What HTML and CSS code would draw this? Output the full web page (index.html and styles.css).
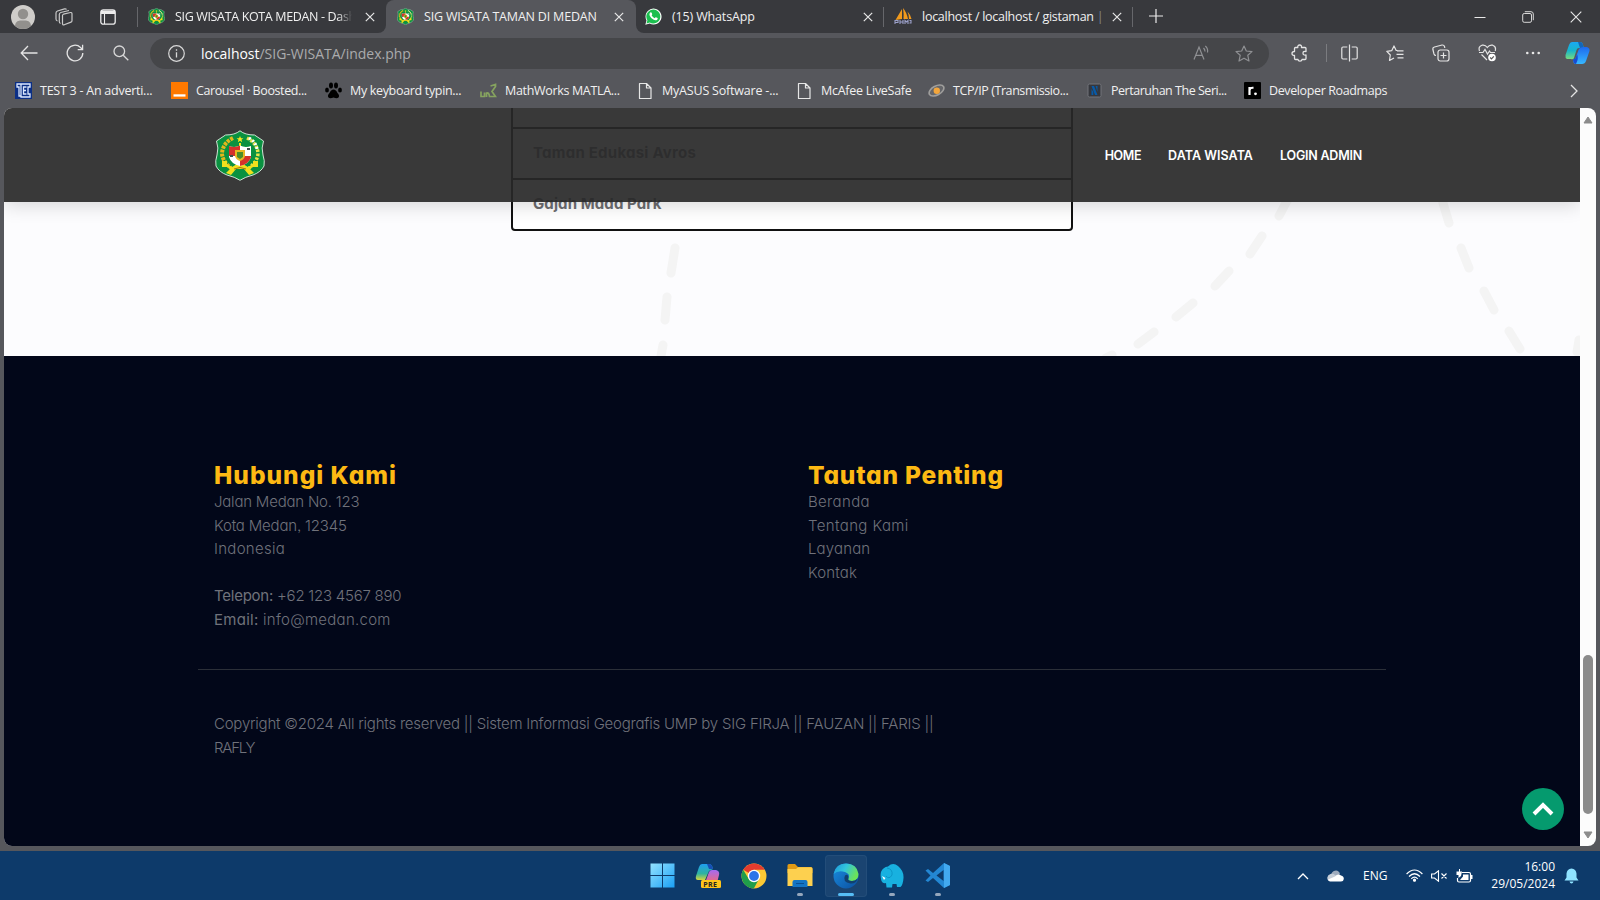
FILE: index.html
```html
<!DOCTYPE html>
<html lang="id">
<head>
<meta charset="utf-8">
<title>SIG WISATA TAMAN DI MEDAN</title>
<link rel="stylesheet" href="styles.css">
</head>
<body>
<svg class="defs" width="0" height="0">
  <symbol id="crest" viewBox="0 0 50 51">
    <path d="M25 .8Q30 5 39.500 5L48.500 11Q46 18 48 25Q50 31 49 36Q46 42 38 45Q30 47 25 50.300Q20 47 12 45Q4 42 1 36Q0 31 2 25Q4 18 1.500 11L10.500 5Q20 5 25 .8Z" fill="#0a9140" stroke="#cfe3d5"/>
    <path d="M18 8Q8 13 7 23Q7 31 16 38" fill="none" stroke="#e3b71a" stroke-width="4" stroke-dasharray="3 1"/>
    <path d="M32 8Q42 13 43 23Q43 31 34 38" fill="none" stroke="#e8e34a" stroke-width="3.500" stroke-dasharray="2.500 1.500"/>
    <path d="M34 8Q41 12 42 19" fill="none" stroke="#fff" stroke-width="3" stroke-dasharray="2 2"/>
    <path d="M7 31H12V34L17 37L22 34H28L33 37L38 34V31H43V37H38L35 39L39 43L34 45L29 39H21L16 45L11 43L15 39L12 37H7Z" fill="#f0e01d"/>
    <path d="M25 6l1 2.300h2.400l-1.900 1.500.7 2.400L25 10.800l-2.200 1.400.7-2.400-1.900-1.500H24Z" fill="#f7e71f"/>
    <path d="M24 13H26V17H24Z" fill="#f7e71f"/>
    <path d="M14 16Q20 18 25 15.500Q30 18 36 16V27Q34 34 25 36Q16 34 14 27Z" fill="#fff"/>
    <path d="M14 16Q20 18 25 15.500V26H36V27Q34 34 25 36V26H14Z" fill="#d5322a"/>
    <path d="M20 20H30V26Q29 30 25 31Q21 30 20 26Z" fill="#e8b923"/>
    <path d="M22 22H28V27L25 29L22 27Z" fill="#4b8d29"/>
    <path d="M19 39Q25 36 31 39" fill="none" stroke="#a46e12"/>
    <path d="M32 19h3M15 26h3" stroke="#40504a" stroke-width="2"/>
  </symbol>
  <symbol id="close" viewBox="0 0 10 10"><path d="M.8.800 9.200 9.200M9.200.8.800 9.200" stroke="#e8e8e8" stroke-width="1.200" fill="none"/></symbol>
  <symbol id="doc" viewBox="0 0 17 18"><path d="M2.500 1.500H9.500L14 6V16.500H2.500ZM9.500 1.500V6H14" fill="none" stroke="#e6e6e6" stroke-width="1.200" stroke-linejoin="round"/></symbol>
</svg>

<div class="tabstrip">
  <div class="tab-tools">
    <svg width="24" height="24" viewBox="0 0 24 24"><defs><clipPath id="av"><circle cx="12" cy="12" r="12"/></clipPath></defs><g clip-path="url(#av)"><path fill="#cfcdca" d="M0 0h24v24H0z"/><circle cx="12" cy="9" r="5.200" fill="#92908d"/><path d="M4 24Q3 16 9 15.500H15Q21 16 20 24Z" fill="#92908d"/></g></svg>
    <svg class="workspaces" width="18" height="18" viewBox="0 0 18 18" fill="none" stroke="#c8c8c8" stroke-width="1.200" stroke-linejoin="round"><path d="M7.500 7.500Q7.500 6.500 8.500 6.200L15.500 4.500Q17 4.300 17 5.800V12.500Q17 13.800 16 14.100L9.200 16.800Q7.500 17.200 7.500 15.500Z"/><path d="M5.500 15.500Q4.300 15 4.300 13.500V6.500Q4.300 5 5.800 4.500L14 2.500M2.500 13Q1 12.500 1 11V5Q1 3.600 2.500 3L9.500.9Q11 .6 11.500 1.500"/></svg>
    <svg width="16" height="16" viewBox="0 0 16 16"><rect x=".8" y=".8" width="14.400" height="14.400" rx="2.500" fill="none" stroke="#ececec" stroke-width="1.300"/><path d="M1 1.500H15V5H1Z" fill="#ececec"/><path d="M4.500 5V15" stroke="#ececec" stroke-width="1.100"/></svg>
  </div>
  <div class="tab tab-first"><svg class="fav" width="17" height="17"><use href="#crest"/></svg><span class="tab-title fade t1">SIG WISATA KOTA MEDAN - Dash</span><svg class="x" width="10" height="10"><use href="#close"/></svg></div>
  <div class="tab tab-active"><svg class="fav" width="17" height="17"><use href="#crest"/></svg><span class="tab-title t2">SIG WISATA TAMAN DI MEDAN</span><svg class="x" width="10" height="10"><use href="#close"/></svg></div>
  <div class="tab tab-third"><svg class="fav" width="17" height="17" viewBox="0 0 17 17"><path d="M.3 16.700 1.500 12.400A8 8 0 1 1 4.700 15.600Z" fill="#fff"/><path d="M1.500 15.500 2.400 12.300A7 7 0 1 1 4.800 14.600Z" fill="#1bbf4f"/><path d="M5.200 4.500Q6.300 3.800 6.800 5L7.200 6.200Q7.300 6.700 6.600 7.300Q7.600 9.300 9.700 10.200L10.600 9.200Q11 9 12.600 10Q13 10.500 12.200 11.700Q10.700 13 8.300 11.600Q5.800 10.200 4.700 7.800Q3.800 5.800 5.200 4.500Z" fill="#fff"/></svg><span class="tab-title t3">(15) WhatsApp</span><svg class="x" width="10" height="10"><use href="#close"/></svg></div>
  <div class="tab tab-fourth"><svg class="fav" width="18" height="17" viewBox="0 0 18 17"><path d="M8 1Q5 6 1.500 12L8 11ZM9 0Q10 6 9.500 11L14 11Q12.500 4 9 0ZM13.500 3.500Q15 7 15 11L17.500 11Q16 6 13.500 3.500Z" fill="#f29a1c"/><path d="M1 16V12.500H4V14.500H1.500M6 12V16M6 14H9V12V16M11 16V12.500L12.500 14 14 12.500V16M15.500 12.500H17V15H15.500" fill="none" stroke="#9ba0c9" stroke-width="1.100"/></svg><span class="tab-title t4">localhost / localhost / gistaman <i>|</i></span><svg class="x" width="10" height="10"><use href="#close"/></svg></div>
  <svg class="plus" width="16" height="16" viewBox="0 0 16 16"><path d="M8 1V15M1 8H15" stroke="#ececec" stroke-width="1.200"/></svg>
  <div class="window-buttons">
    <svg width="12" height="12" viewBox="0 0 12 12"><path d="M.5 6.500H11.500" stroke="#e8e8e8"/></svg>
    <svg width="12" height="12" viewBox="0 0 12 12" fill="none" stroke="#d8d8d8"><rect x=".7" y="2.500" width="8.800" height="8.800" rx="1.500"/><path d="M2.800.7H9Q11.300.8 11.300 3V9.200"/></svg>
    <svg width="12" height="12" viewBox="0 0 12 12"><path d="M.7.700 11.300 11.300M11.300.7.700 11.300" stroke="#e8e8e8" stroke-width="1.100"/></svg>
  </div>
</div>

<div class="toolbar">
  <div class="tool"><svg width="18" height="16" viewBox="0 0 18 16" fill="none" stroke="#e4e4e4" stroke-width="1.300"><path d="M8 1 1.200 8 8 15M1.200 8H17.500"/></svg></div>
  <div class="tool"><svg width="18" height="18" viewBox="0 0 18 18" fill="none" stroke="#e4e4e4" stroke-width="1.300"><path d="M16.800 9A7.800 7.800 0 1 1 14.500 3.500L16.500 5.500M16.600.8V5.700H11.700"/></svg></div>
  <div class="tool"><svg width="16" height="16" viewBox="0 0 16 16" fill="none" stroke="#d8d8d8" stroke-width="1.300"><circle cx="6.300" cy="6.300" r="5.300"/><path d="M10.200 10.200 15.300 15.300"/></svg></div>
  <div class="omnibox">
    <svg width="17" height="17" viewBox="0 0 17 17"><circle cx="8.500" cy="8.500" r="7.800" fill="none" stroke="#d8d8d8" stroke-width="1.200"/><path d="M8.500 7.300V12.500M8.500 4.300V5.800" stroke="#d8d8d8" stroke-width="1.300"/></svg>
    <span class="url"><b>localhost</b>/SIG-WISATA/index.php</span>
    <svg class="read" width="18" height="16" viewBox="0 0 18 16" fill="none" stroke="#8f9093" stroke-width="1.200"><path d="M1 14.500 6 2 11 14.500M2.800 10.300H9.300M10.500 3Q12 4.500 12 6.500M12.300 1Q15.300 3.500 14.500 7.500" /></svg>
    <svg class="star" width="18" height="17" viewBox="0 0 18 17" fill="none" stroke="#8f9093" stroke-width="1.200" stroke-linejoin="round"><path d="M9 1 11.300 6 17 6.600 12.800 10.300 14 16 9 13.200 4 16 5.200 10.300 1 6.600 6.700 6Z"/></svg>
  </div>
  <div class="tool tool-ext"><svg width="18" height="18" viewBox="0 0 18 18" fill="none" stroke="#e4e4e4" stroke-width="1.300" stroke-linejoin="round"><path d="M6.800 3.500Q6.500 1 8.700 1Q10.800 1 10.500 3.500H14Q15 3.500 15 4.500V7.500Q12 7 12 9.200Q12 11.400 15 11V14.500Q15 15.500 14 15.500H11Q10.800 17.200 9 17.200Q7.200 17.200 7 15.500H4.500Q3.500 15.500 3.500 14.500V11.500Q1 11.500 1 9.500Q1 7.500 3.500 7.500V4.500Q3.500 3.500 4.500 3.500Z"/></svg></div>
  <div class="tool tool-split"><svg width="17" height="18" viewBox="0 0 17 18" fill="none" stroke="#e4e4e4" stroke-width="1.200"><path d="M8.500.5V17.500M6.300 3H2Q.8 3 .8 4.200V13.800Q.8 15 2 15H6.300M10.700 3H15Q16.200 3 16.200 4.200V13.800Q16.200 15 15 15H10.700"/></svg></div>
  <div class="tool"><svg width="18" height="17" viewBox="0 0 18 17" fill="none" stroke="#e4e4e4" stroke-width="1.200" stroke-linejoin="round"><path d="M11.500 5.500H10.200L8 .9 5.700 5.700.8 6.400 4.300 10 3.500 15.500 8 13M11 5.800H17.500M10.500 9.300H17.500M11.500 12.800H17.500"/></svg></div>
  <div class="tool"><svg width="18" height="18" viewBox="0 0 18 18" fill="none" stroke="#e4e4e4" stroke-width="1.200"><rect x="6" y="6" width="11" height="11" rx="2.200"/><path d="M11.500 8.500V14.500M8.500 11.500H14.500M4 11.500Q2.500 11.500 2 10L.9 5.500Q.5 3.500 2.500 3L10 1Q12 .8 12.500 2.500L12.800 4"/></svg></div>
  <div class="tool"><svg width="19" height="18" viewBox="0 0 19 18" fill="none" stroke="#e4e4e4" stroke-width="1.200"><path d="M1.500 7Q0 2.500 4 1.200Q7.300.5 9.300 3.500Q11.300.5 14.700 1.200Q18.500 2.500 17.200 7M3.500 10.500 9 16M1 8.500H5L7 5.500 9.500 10 11.500 7 12.500 8.500H17"/><circle cx="14" cy="13.500" r="3.800" fill="#fff" stroke="none"/><path d="M12.200 13.500 13.500 14.800 15.800 12.400" stroke="#555"/></svg></div>
  <div class="tool"><svg width="16" height="6" viewBox="0 0 16 6" fill="#e8e8e8"><circle cx="2.300" cy="3" r="1.300"/><circle cx="8" cy="3" r="1.300"/><circle cx="13.700" cy="3" r="1.300"/></svg></div>
  <div class="tool tool-copilot"><svg width="25" height="24" viewBox="0 0 25 24"><defs><linearGradient id="c1" x2="0" y2="1"><stop stop-color="#19a9f4"/><stop offset=".5" stop-color="#18b5c9"/><stop offset="1" stop-color="#7bdd7b"/></linearGradient><linearGradient id="c2" x2="0" y2="1"><stop stop-color="#1d69ef"/><stop offset="1" stop-color="#37b8ff"/></linearGradient></defs><path d="M7 1H15Q17.500 1 18 4L19 7H14Q12 7 11.500 9L9 17Q8 19 6 18H2Q0 17 .5 14L4 4Q5 1 7 1Z" fill="url(#c1)"/><path d="M15 1Q17.500 1 18 4L19 7H15L13 1Z" fill="#1466b8"/><path d="M19 6H22Q25 7 24.500 10L21 20Q20 23 17 23H10Q8 22 8 18Q10 19 11 16L13.500 9Q14.500 6 19 6Z" fill="url(#c2)"/><path d="M8 18Q10 19 11 16L12 13Q14 17 11 23Q8 23 8 18Z" fill="#174cd2"/></svg></div>
</div>

<div class="bookmarks">
  <div class="bm b1"><svg width="17" height="17" viewBox="0 0 17 17"><path fill="#0b2f86" d="M0 0h17v17H0z"/><path d="M6 2H2V5H4V14H6M6 2H15V5H13V12H15V15H6ZM11.500 5H8.500V12H11.500M8.500 8.500H11" fill="none" stroke="#dce8ff" stroke-width="1.300"/></svg><span>TEST 3 - An adverti...</span></div>
  <div class="bm b2"><svg width="17" height="17" viewBox="0 0 17 17"><path fill="#ff7900" d="M0 0h17v17H0z"/><path fill="#fff" d="M2.500 12.300h12v2.300h-12z"/></svg><span>Carousel · Boosted...</span></div>
  <div class="bm b3"><svg width="17" height="17" viewBox="0 0 17 17"><path d="M8.500 7.500Q11 7.500 12.500 11Q15 13.500 13.500 15.500Q12 17 8.500 15.500Q5 17 3.500 15.500Q2 13.500 4.500 11Q6 7.500 8.500 7.500Z"/><ellipse cx="6" cy="3.500" rx="2" ry="3"/><ellipse cx="11" cy="3.500" rx="2" ry="3"/><ellipse cx="2" cy="8" rx="1.900" ry="2.500"/><ellipse cx="15" cy="8" rx="1.900" ry="2.500"/></svg><span>My keyboard typin...</span></div>
  <div class="bm b4"><svg width="17" height="17" viewBox="0 0 17 17"><path d="M1 9.500V14.500H4.500V10.500M6.500 15V11Q9 10 9.500 14.500H15.500L12 9.500 15.500 4.500V2.500L10.500 4" fill="none" stroke="#86a35f" stroke-width="1.700"/></svg><span>MathWorks MATLA...</span></div>
  <div class="bm b5"><svg width="17" height="18"><use href="#doc"/></svg><span>MyASUS Software -...</span></div>
  <div class="bm b6"><svg width="17" height="18"><use href="#doc"/></svg><span>McAfee LiveSafe</span></div>
  <div class="bm b7"><svg width="17" height="17" viewBox="0 0 17 17"><ellipse cx="8.500" cy="8.500" rx="8" ry="4.500" transform="rotate(-28 8.500 8.500)" fill="#65666a" stroke="#a09f9d" stroke-width="1.600"/><circle cx="8.800" cy="8.800" r="3.200" fill="#f3a63c"/></svg><span>TCP/IP (Transmissio...</span></div>
  <div class="bm b8"><svg width="17" height="17" viewBox="0 0 17 17"><rect x="2" y="2" width="13" height="13" rx="1.500" fill="#35373d" stroke="#73747a"/><path d="M5.500 4H8L11.500 13H9ZM5.500 7V13H7.300V10M9.600 4H11.500V10" fill="#075aa8"/></svg><span>Pertaruhan The Seri...</span></div>
  <div class="bm b9"><svg width="17" height="17" viewBox="0 0 17 17"><rect width="17" height="17" rx="1" fill="#000"/><path d="M5.500 13V5M5.500 8Q6 5.500 9.500 5.800" fill="none" stroke="#fff" stroke-width="2.200"/><circle cx="11.500" cy="11.800" r="1.400" fill="#fff"/></svg><span>Developer Roadmaps</span></div>
  <svg class="more" width="8" height="14" viewBox="0 0 8 14"><path d="M1 1 7 7 1 13" fill="none" stroke="#e4e4e4" stroke-width="1.300"/></svg>
</div>

<div class="viewport">
  <main class="page">
    <header class="site-nav">
      <svg class="logo" width="50" height="51"><use href="#crest"/></svg>
      <nav><a class="n1">HOME</a><a class="n2">DATA WISATA</a><a class="n3">LOGIN ADMIN</a></nav>
    </header>
    <section class="list-area">
      <svg class="dashes" width="1576" height="248" viewBox="4 108 1576 248" fill="none" stroke="#f4f4f4" stroke-width="9" stroke-linecap="round"><path d="M675 248 671 273M667 297 665 320M663 345 661 356M1288 199 1279 216M1262 236 1250 254M1229 271 1215 286M1193 303 1176 317M1154 332 1138 344M1112 355 1106 358M1443 203 1449 223M1461 248 1469 268M1484 291 1494 310M1509 331 1520 349M1579 340 1577 352"/></svg>
      <ul class="parks">
        <li></li>
        <li><span class="p1">Taman Edukasi Avros</span></li>
        <li><span class="p2">Gajah Mada Park</span></li>
      </ul>
    </section>
    <footer class="site-footer">
      <div class="cols">
        <div class="col">
          <h3><span class="h1">Hubungi Kami</span></h3>
          <p><span class="f1">Jalan Medan No. 123</span><br><span class="f2">Kota Medan, 12345</span><br><span class="f3">Indonesia</span></p>
          <p class="contact"><span class="f4"><strong>Telepon:</strong> +62 123 4567 890</span><br><span class="f5"><strong>Email:</strong> info@medan.com</span></p>
        </div>
        <div class="col">
          <h3><span class="h2">Tautan Penting</span></h3>
          <p><a class="f6">Beranda</a><br><a class="f7">Tentang Kami</a><br><a class="f8">Layanan</a><br><a class="f9">Kontak</a></p>
        </div>
      </div>
      <p class="copyright"><span class="f10">Copyright ©2024 All rights reserved || Sistem Informasi Geografis UMP by SIG FIRJA || FAUZAN || FARIS ||</span><br><span class="f11">RAFLY</span></p>
    </footer>
    <a class="to-top"><svg width="22" height="14" viewBox="0 0 22 14"><path d="M2 12 11 3 20 12" fill="none" stroke="#fff" stroke-width="4"/></svg></a>
  </main>
  <div class="scrollbar">
    <svg width="10" height="8" viewBox="0 0 10 8"><path d="M5 1 9 7H1Z" fill="#8b8b8b" stroke="#8b8b8b" stroke-linejoin="round"/></svg>
    <div class="thumb"></div>
    <svg width="10" height="8" viewBox="0 0 10 8"><path d="M5 7 9 1H1Z" fill="#8b8b8b" stroke="#8b8b8b" stroke-linejoin="round"/></svg>
  </div>
</div>

<div class="taskbar">
  <div class="apps">
    <div class="app"><svg width="25" height="25" viewBox="0 0 25 25"><defs><linearGradient id="w" x2="1" y2="1"><stop stop-color="#93e2ff"/><stop offset="1" stop-color="#1aa0f5"/></linearGradient></defs><path d="M.5.500H12V12H.5ZM13 .5H24.500V12H13ZM.5 13H12V24.500H.5ZM13 13H24.500V24.500H13Z" fill="url(#w)"/></svg></div>
    <div class="app"><svg width="26" height="25" viewBox="0 0 26 25"><defs><linearGradient id="q1" x2="0" y2="1"><stop stop-color="#1f9df0"/><stop offset=".6" stop-color="#2eb3a0"/><stop offset="1" stop-color="#d7d63c"/></linearGradient><linearGradient id="q2" x2="0" y2="1"><stop stop-color="#a46bf2"/><stop offset="1" stop-color="#f26a76"/></linearGradient></defs><path d="M7 1H14Q17 1 18 6L14 8 10 17H3Q0 17 1 13L4 4Q5 1 7 1Z" fill="url(#q1)"/><path d="M14 1Q17 1 18 6H14L12 1Z" fill="#174db4"/><path d="M17 7H21Q25 8 24 12L22 20H10L14 9Q15 7 17 7Z" fill="url(#q2)"/><rect x="6" y="17" width="20" height="8" rx="1.500" fill="#ffc51b"/><text x="8.300" y="23.800" class="pre">PRE</text></svg></div>
    <div class="app"><svg width="26" height="26" viewBox="0 0 26 26"><circle cx="13" cy="13" r="12.500" fill="#fcc934"/><path d="M13 13 2.200 6.800A12.500 12.500 0 0 1 23.800 6.800H13Z" fill="#e33b2e"/><path d="M2.200 6.800 8 16.500 13 18.800 18 16 12.800 25.500A12.500 12.500 0 0 1 2.200 6.800Z" fill="#1f9e4b"/><circle cx="13" cy="13" r="6.200" fill="#fff"/><circle cx="13" cy="13" r="4.900" fill="#2e74e8"/></svg></div>
    <div class="app running"><svg width="26" height="25" viewBox="0 0 26 25"><path d="M.5 2.500Q.5 1 2 1H8L11 4H24Q25.500 4 25.500 5.500V10H.5Z" fill="#e09a14"/><path d="M.5 6H9L11 4.200H24Q25.500 4.200 25.500 6V23H.5Z" fill="#fdd04f"/><path d="M5.500 24V19Q5.500 17 7.500 17H18.500Q20.500 17 20.500 19V24Z" fill="#1474c4"/><path d="M9 20.500H17" stroke="#0b4f91"/></svg></div>
    <div class="app active"><svg width="26" height="26" viewBox="0 0 26 26"><defs><linearGradient id="e1" x2="1" y2=".4"><stop stop-color="#1b94dc"/><stop offset=".5" stop-color="#32c5dc"/><stop offset="1" stop-color="#6be35a"/></linearGradient><linearGradient id="e2" x2="1" y2="1"><stop stop-color="#1a8ee0"/><stop offset="1" stop-color="#0b4f9f"/></linearGradient></defs><circle cx="13" cy="13" r="12.500" fill="url(#e2)"/><path d="M.6 11Q2.500.6 13 .5Q24 .6 25.500 11Q25.500 17.500 19 18Q14 18 15.500 15Q17.500 11 12 9Q5 7 .6 11Z" fill="url(#e1)"/><path d="M15.500 15Q14 18 19 18Q22 18 24.500 15.800Q23 21 17.500 20.500Q9 19 12 12.500Q15 10 15.500 15Z" fill="#11406f"/></svg></div>
    <div class="app running"><svg width="24" height="25" viewBox="0 0 24 25"><path d="M1 9Q3 4 8 3.500Q13-1 18 3Q24 8 23.500 15Q23 22 20.500 24H17L16.500 21H12.500L12 24.500H6.500L6 20Q3 21 1.500 18Q0 13 1 9Z" fill="#18b1e0"/><path d="M7 5Q13 6 12 12Q9 17 6 13" fill="none" stroke="#0c96c8"/><path d="M2 13 5.500 15 4 17Z" fill="#fff"/></svg></div>
    <div class="app running"><svg width="26" height="25" viewBox="0 0 26 25"><path d="M19 0 25 3V22L19 25 8 15 3 19 .5 17.500 5.500 12.500.5 7.500 3 6 8 10Z" fill="#2387d3"/><path d="M18.500 7V18L11.500 12.500Z" fill="#0d3a6a"/><path d="M19 0 25 3V22L19 25Z" fill="#42a9ef"/></svg></div>
  </div>
  <div class="tray">
    <svg class="up" width="12" height="8" viewBox="0 0 12 8"><path d="M1 7 6 2 11 7" fill="none" stroke="#fff" stroke-width="1.300"/></svg>
    <svg class="cloud" width="17" height="12" viewBox="0 0 17 12"><path d="M4 6Q4 1 9 .5Q12 .5 13 4L9 7Z" fill="#9eabbd"/><path d="M3.500 4Q6 3 8 5L12 7 9 11H3Q0 10.500 .3 7.500Q.8 4.500 3.500 4Z" fill="#c6ced8"/><path d="M3 11.500Q1 11 1 9.500L8 6.500Q11 3 14 5.500Q17 6 16.800 9Q16.500 11.500 14 11.500Z" fill="#fff"/></svg>
    <span class="lang">ENG</span>
    <svg class="wifi" width="17" height="13" viewBox="0 0 17 13" fill="none" stroke="#fff" stroke-width="1.200"><path d="M.6 5Q8.500-3 16.400 5M3 7.500Q8.500 2 14 7.500M5.300 9.800Q8.500 6.500 11.700 9.800"/><circle cx="8.500" cy="11.200" r="1" fill="#fff"/></svg>
    <svg class="sound" width="17" height="12" viewBox="0 0 17 12" fill="none" stroke="#fff" stroke-width="1.100"><path d="M.6 4H3.500L7.500.8V11.200L3.500 8H.6ZM10.500 3.500 15.500 8.500M15.500 3.500 10.500 8.500"/></svg>
    <svg class="battery" width="17" height="14" viewBox="0 0 17 14"><path d="M6 3.500H13Q14.500 3.500 14.500 5V11.500Q14.500 13 13 13H3Q1.500 13 1.500 11.500V9" fill="none" stroke="#fff" stroke-width="1.200"/><path d="M7 5.500H12.500V11H4L7 7.500ZM3 0H4V2.500H6L5 7 2.500 9V6H.5V2.500H3ZM15 6H16.500V10H15Z" fill="#fff"/></svg>
    <div class="clock"><span class="time">16:00</span><span class="date">29/05/2024</span></div>
    <svg class="bell" width="15" height="16" viewBox="0 0 15 16"><path d="M7.500.5Q12 .8 12.500 5.500V9.500L14.500 12.500H.5L2.500 9.500V5.500Q3 .8 7.500.5ZM5.500 13.500H9.500Q9 15.500 7.500 15.500Q6 15.500 5.500 13.500Z" fill="#8fe3ff"/></svg>
  </div>
</div>
</body>
</html>
```
FILE: styles.css
```css
* { box-sizing: border-box; }
body {
  margin: 0;
  width: 1600px;
  height: 900px;
  overflow: hidden;
  display: flex;
  flex-direction: column;
  background: #56575c;
  font-family: "Open Sans", "Noto Sans", sans-serif;
  font-size: 12.5px;
  color: #f0f0f0;
}
svg { display: block; flex: none; }
.defs { position: absolute; }
span, a { white-space: nowrap; }

/* Tab strip */
.tabstrip { display: flex; height: 33px; background: #56575c; }
.tab-tools { display: flex; align-items: center; width: 137px; background: #38393d; padding-left: 11px; }
.tab-tools .workspaces { margin: 0 27px 0 20px; }
.tab { display: flex; align-items: center; height: 33px; background: #38393d; }
.tab-first { width: 249px; padding-left: 11px; border-bottom-right-radius: 8px; background: linear-gradient(#66676b, #66676b) 0 7px / 1px 20px no-repeat #38393d; }
.tab-active { width: 250px; padding-left: 11px; background: #56575c; border-radius: 8px 8px 0 0; box-shadow: 0 -8px 0 8px #38393d; clip-path: inset(0); }
.tab-third { width: 247px; padding-left: 9px; border-bottom-left-radius: 8px; }
.tab-fourth { width: 250px; padding-left: 11px; background: linear-gradient(#66676b, #66676b) 0 7px / 1px 20px no-repeat, linear-gradient(#66676b, #66676b) 249px 7px / 1px 20px no-repeat #38393d; }
.tab-title { margin-left: 10px; width: 181px; }
.fade { -webkit-mask-image: linear-gradient(90deg, #000 90%, transparent 98%); mask-image: linear-gradient(90deg, #000 90%, transparent 98%); }
.tab-title i { font-style: normal; color: #85868a; }
.t1 { letter-spacing: -.35px; }
.t2 { letter-spacing: -.19px; }
.t3 { letter-spacing: -.15px; }
.t4 { letter-spacing: -.27px; }
.tab .x { margin-left: 9px; }
.tab-third .x { margin-left: 10px; }
.plus { width: 37px; height: 33px; background: #38393d; padding: 8px 6px 9px 15px; }
.window-buttons { flex: 1; display: flex; justify-content: flex-end; align-items: center; gap: 36px; padding-right: 18px; background: #38393d; }

/* Toolbar */
.toolbar { display: flex; align-items: center; height: 40px; padding-left: 6px; }
.tool { width: 46px; flex: none; display: flex; justify-content: center; align-items: center; }
.omnibox { display: flex; align-items: center; width: 1119px; height: 31px; margin-left: 6px; padding: 0 16px 0 18px; border-radius: 16px; background: #454649; }
.url { margin-left: 16px; font-size: 14px; letter-spacing: -.02px; color: #aaabad; }
.url b { font-weight: 400; color: #fff; }
.read { margin-left: auto; }
.star { margin-left: 24px; }
.tool-ext { margin-left: 8px; }
.tool-split { margin-left: 3px; border-left: 1px solid #7b7c80; height: 18px; }
.tool-copilot { width: 42px; }

/* Bookmarks */
.bookmarks { display: grid; grid-template-columns: 156px 154px 155px 157px 159px 132px 158px 158px 326px 8px; align-items: center; height: 35px; padding-left: 15px; }
.bm { display: flex; align-items: center; gap: 8px; }
.bm span { position: relative; top: -.5px; }
.b1 { letter-spacing: -.25px; }
.b2 { letter-spacing: -.4px; }
.b3 { letter-spacing: -.33px; }
.b4 { letter-spacing: -.33px; }
.b5 { letter-spacing: -.2px; }
.b6 { letter-spacing: -.27px; }
.b7 { letter-spacing: -.42px; }
.b8 { letter-spacing: -.48px; }
.b9 { letter-spacing: -.38px; }

/* Web page */
.viewport { display: flex; width: 1592px; height: 738px; margin-left: 4px; border-radius: 8px; overflow: hidden; }
.page { position: relative; width: 1576px; overflow: hidden; display: flex; flex-direction: column; background: #fcfcfe; font-family: Inter, "Open Sans", sans-serif; font-feature-settings: "cv11", "ss03"; }
.site-nav { position: absolute; inset: 0 0 auto; z-index: 2; display: flex; align-items: center; justify-content: space-between; height: 94px; padding: 0 218px 0 211px; background: rgba(40, 40, 40, .92); box-shadow: 0 3px 18px rgba(0, 0, 0, .16); }
.site-nav nav { display: flex; gap: 27px; font-size: 12.5px; font-weight: 600; color: #fff; }
.n1 { letter-spacing: -.4px; }
.n2 { letter-spacing: .05px; }
.n3 { letter-spacing: -.22px; }
.list-area { position: relative; height: 248px; overflow: hidden; flex: none; }
.dashes { position: absolute; inset: 0; }
.parks { position: relative; width: 562px; height: 132px; margin: -9px 0 0 507px; padding: 0; list-style: none; border: 2px solid #111; border-radius: 4px; background: #fff; color: #6c6c70; font-size: 15px; font-weight: 700; }
.parks li { height: 51px; padding: 0 20px; line-height: 48px; border-bottom: 2px solid #111; }
.parks li:first-child { height: 28px; }
.parks li:last-child { border: 0; }
.p1 { letter-spacing: .24px; }
.p2 { letter-spacing: .1px; }

/* Footer */
.site-footer { flex: 1; background: #020719; color: #70727b; padding: 104px 194px 0; font-size: 15px; font-weight: 300; line-height: 23.6px; }
.cols { display: grid; grid-template-columns: 594px 594px; height: 210px; padding-left: 16px; border-bottom: 1px solid #2b2f38; width: 1188px; }
.site-footer h3 { margin: 0; font-size: 24.5px; font-weight: 800; line-height: 30px; color: #fdb913; }
.site-footer p { margin: 0; }
.site-footer .contact { margin-top: 23.600px; }
.site-footer strong { font-weight: 400; }
.site-footer .copyright { margin: 42px 0 0 16px; }
.h1 { letter-spacing: 1px; }
.h2 { letter-spacing: .77px; }
.f1 { letter-spacing: -.21px; }
.f2 { letter-spacing: -.18px; }
.f3 { letter-spacing: .28px; }
.f4 { letter-spacing: -.24px; }
.f5 { letter-spacing: .27px; }
.f6 { letter-spacing: .34px; }
.f7 { letter-spacing: .38px; }
.f8 { letter-spacing: .15px; }
.f9 { letter-spacing: .17px; }
.f10 { letter-spacing: -.22px; }
.f11 { letter-spacing: -1.2px; }
.to-top { position: absolute; right: 16px; bottom: 16px; width: 42px; height: 42px; border-radius: 50%; background: #059a6e; display: flex; align-items: center; justify-content: center; }

/* Scrollbar */
.scrollbar { width: 16px; background: #fcfcfc; display: flex; flex-direction: column; align-items: center; padding: 8px 0 7px; }
.thumb { width: 10px; height: 159px; margin: auto 0 17px; border-radius: 5px; background: #8b8b8b; }

/* Taskbar */
.taskbar { display: flex; align-items: center; height: 49px; margin-top: auto; padding-left: 641px; background: #0d3a6a; }
.apps { display: flex; gap: 4px; }
.app { position: relative; display: flex; align-items: center; justify-content: center; width: 42px; height: 42px; border-radius: 4px; }
.app.active { background: #1a4471; box-shadow: inset 0 0 0 1px #234d79; }
.app.running::after, .app.active::after { content: ""; position: absolute; bottom: 1px; left: 18px; width: 6px; height: 3px; border-radius: 2px; background: #95a7bd; }
.app.active::after { left: 13px; width: 16px; background: #56bdf5; }
.pre { font: 700 7px "Open Sans", sans-serif; fill: #222; letter-spacing: .3px; }
.tray { display: flex; align-items: center; margin-left: auto; padding-right: 21px; font-size: 12px; color: #fff; }
.cloud { margin: 0 19px 0 18px; }
.lang { width: 25px; }
.wifi { margin: 0 8px 0 18px; }
.battery { margin: 0 0 0 8px; }
.clock { display: flex; flex-direction: column; align-items: flex-end; width: 82px; line-height: 16.500px; }
.bell { margin-left: 9px; }
```
